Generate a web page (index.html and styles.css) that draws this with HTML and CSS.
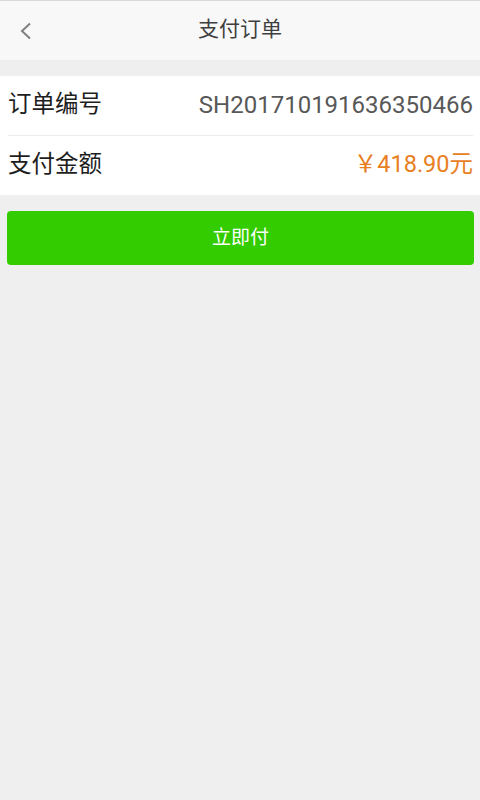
FILE: index.html
```html
<!DOCTYPE html>
<html lang="zh">
<head>
<meta charset="utf-8">
<title>支付订单</title>
<link rel="stylesheet" href="styles.css">
</head>
<body>
<div class="page">
  <header class="topbar">
    <span class="back">
      <svg width="14" height="18" viewBox="0 0 14 18"><polyline points="11,1.5 3,9 11,16.5" fill="none" stroke="#808080" stroke-width="2"/></svg>
    </span>
    <h1 class="title">支付订单</h1>
  </header>
  <section class="card">
    <div class="row">
      <span class="label">订单编号</span>
      <span class="value">SH201710191636350466</span>
    </div>
    <div class="row">
      <span class="label">支付金额</span>
      <span class="amount">￥418.90元</span>
    </div>
  </section>
  <div class="actions">
    <button class="pay">立即付</button>
  </div>
</div>
</body>
</html>
```
FILE: styles.css
```css
html, body {
  margin: 0;
  padding: 0;
  background: #efefef;
}
body {
  font-family: Roboto, "Noto Sans CJK SC", sans-serif;
  width: 480px;
  height: 800px;
  overflow: hidden;
}
.topbar {
  position: relative;
  height: 59px;
  background: #f8f8f8;
  border-top: 1px solid #d9d9d9;
  border-bottom: 1px solid #ececec;
  display: flex;
  align-items: center;
  justify-content: center;
}
.back {
  position: absolute;
  left: 19px;
  top: 21px;
  display: flex;
}
.title {
  margin: 0 0 2px;
  font-size: 21px;
  line-height: 1;
  font-weight: normal;
  color: #3f3f3f;
}
.card {
  margin-top: 15px;
  background: #fff;
  padding: 0 7px 0 8px;
}
.row {
  height: 59px;
  box-sizing: border-box;
  padding-bottom: 1px;
  display: flex;
  align-items: center;
  justify-content: space-between;
  line-height: 1;
}
.row + .row {
  height: 60px;
  border-top: 1px solid #ececec;
}
.label {
  font-size: 23.5px;
  color: #1e1e1e;
}
.value {
  font-size: 24px;
  color: #585858;
}
.amount {
  font-size: 23.5px;
  color: #e8801f;
}
.actions {
  padding: 16px 6px 0 7px;
}
.pay {
  display: block;
  width: 100%;
  height: 54px;
  border: none;
  border-radius: 4px;
  background: #33cc00;
  color: #fff;
  font-family: Roboto, "Noto Sans CJK SC", sans-serif;
  font-size: 19px;
  line-height: 1;
  padding: 0 0 2px;
}
```
